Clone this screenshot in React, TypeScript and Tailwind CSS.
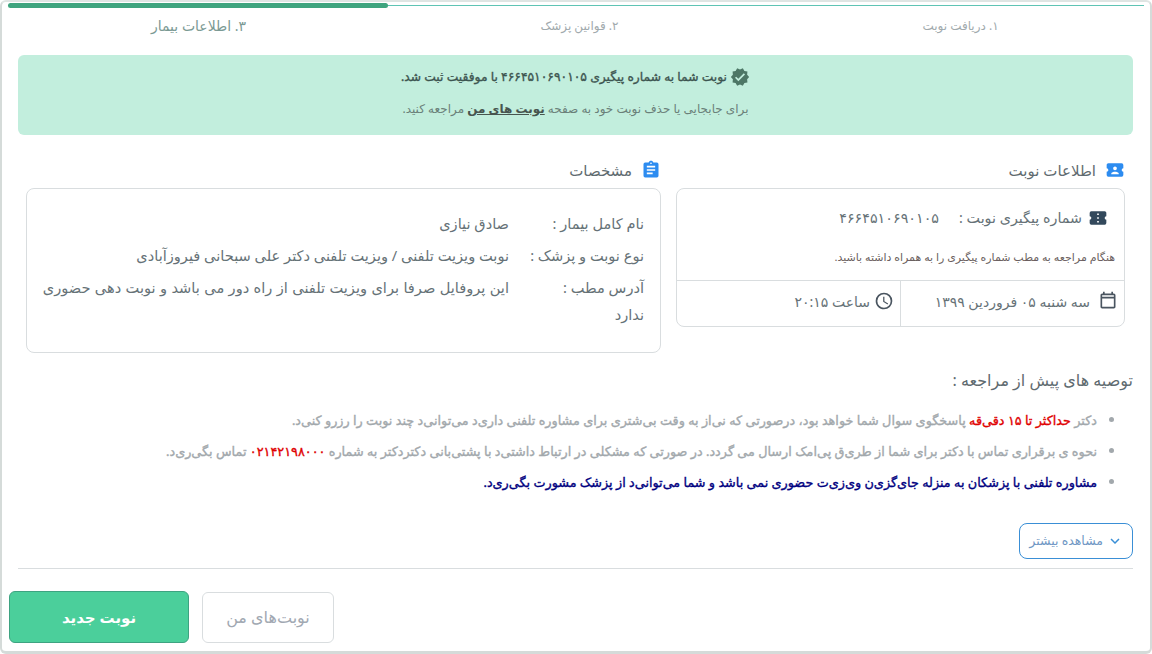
import React from "react";

const FONT = "font-['Noto_Sans','DejaVu_Sans',sans-serif]";

function Mdi({ d, className }: { d: string; className: string }) {
  return (
    <svg viewBox="0 0 24 24" className={className} fill="currentColor" aria-hidden="true">
      <path d={d} />
    </svg>
  );
}

const icons = {
  decagram:
    "M23,12L20.56,9.22L20.9,5.54L17.29,4.72L15.4,1.54L12,3L8.6,1.54L6.71,4.72L3.1,5.53L3.44,9.21L1,12L3.44,14.78L3.1,18.47L6.71,19.29L8.6,22.47L12,21L15.4,22.46L17.29,19.28L20.9,18.46L20.56,14.78L23,12M10,17L6,13L7.41,11.59L10,14.17L16.59,7.58L18,9L10,17Z",
  clipboard:
    "M17,9H7V7H17M17,13H7V11H17M14,17H7V15H14M12,3A1,1 0 0,1 13,4A1,1 0 0,1 12,5A1,1 0 0,1 11,4A1,1 0 0,1 12,3M19,3H14.82C14.4,1.84 13.3,1 12,1C10.7,1 9.6,1.84 9.18,3H5A2,2 0 0,0 3,5V19A2,2 0 0,0 5,21H19A2,2 0 0,0 21,19V5A2,2 0 0,0 19,3Z",
  ticketAccount:
    "M20,12A2,2 0 0,0 22,14V18A2,2 0 0,1 20,20H4A2,2 0 0,1 2,18V14C3.11,14 4,13.1 4,12A2,2 0 0,0 2,10V6C2,4.89 2.9,4 4,4H20A2,2 0 0,1 22,6V10A2,2 0 0,0 20,12M16.5,16.25C16.5,14.75 13.5,14 12,14C10.5,14 7.5,14.75 7.5,16.25V17H16.5V16.25M12,12.25A2.25,2.25 0 0,0 14.25,10A2.25,2.25 0 0,0 12,7.75A2.25,2.25 0 0,0 9.75,10A2.25,2.25 0 0,0 12,12.25Z",
  ticket:
    "M13,8.5H11V6.5H13V8.5M13,13H11V11H13V13M13,17.5H11V15.5H13V17.5M22,10V6C22,4.89 21.1,4 20,4H4A2,2 0 0,0 2,6V10C3.11,10 4,10.9 4,12A2,2 0 0,1 2,14V18A2,2 0 0,0 4,20H20A2,2 0 0,0 22,18V14A2,2 0 0,1 20,12A2,2 0 0,1 22,10Z",
  calendar:
    "M19 3H18V1H16V3H8V1H6V3H5C3.9 3 3 3.9 3 5V19C3 20.1 3.9 21 5 21H19C20.1 21 21 20.1 21 19V5C21 3.9 20.1 3 19 3M19 19H5V9H19V19M19 7H5V5H19V7Z",
  clock:
    "M12,20A8,8 0 0,0 20,12A8,8 0 0,0 12,4A8,8 0 0,0 4,12A8,8 0 0,0 12,20M12,2A10,10 0 0,1 22,12A10,10 0 0,1 12,22C6.47,22 2,17.5 2,12A10,10 0 0,1 12,2M12.5,7V12.25L17,14.92L16.25,16.15L11,13V7H12.5Z",
  chevron: "M7.41,8.58L12,13.17L16.59,8.58L18,10L12,16L6,10L7.41,8.58Z",
};

function Row({ label, children }: { label: string; children: React.ReactNode }) {
  return (
    <div className="flex">
      <div className="w-[135px] shrink-0 whitespace-nowrap">{label}</div>
      <div className="flex-1">{children}</div>
    </div>
  );
}

export default function App() {
  return (
    <div
      dir="rtl"
      className={`${FONT} relative flex h-[654px] w-[1152px] flex-col overflow-hidden rounded-md border-2 border-b-[3px] border-[#d5dbd9] border-t-[#dfe5e3] bg-white text-[#667277]`}
    >
      <div className="mx-[6px] mt-[1px] flex h-[5px] flex-row-reverse items-center">
        <div className="h-[5px] w-[380px] rounded-full bg-[#3fa57f]" />
        <div className="h-px flex-1 bg-[#5fc4b4]" />
      </div>

      <div className="ml-[6px] mr-[-1px] mt-[8px] grid h-[20px] grid-cols-3 text-center text-[12px] leading-[20px] text-[#a1aaad]">
        <div>۱. دریافت نوبت</div>
        <div>۲. قوانین پزشک</div>
        <div className="text-[14px] text-[#7b9a94]">۳. اطلاعات بیمار</div>
      </div>

      <div className="ml-[16px] mr-[17px] mt-[19px] flex h-[80px] flex-col items-center justify-center gap-[15px] rounded-md bg-[#c2eedd] pb-[5px] text-[#3d5550]">
        <div className="flex h-[18px] items-center gap-[3px] text-[12.3px] leading-[18px] [-webkit-text-stroke-width:0.35px]">
          <Mdi d={icons.decagram} className="h-[20px] w-[20px] text-[#4d7766]" />
          <span>نوبت شما به شماره پیگیری ۴۶۶۴۵۱۰۶۹۰۱۰۵ با موفقیت ثبت شد.</span>
        </div>
        <div className="h-[16px] text-[12px] leading-[16px] text-[#6a8079]">
          برای جابجایی یا حذف نوبت خود به صفحه <b className="font-bold text-[#47554f] underline">نوبت های من</b> مراجعه کنید.
        </div>
      </div>

      <div className="ml-[24px] mr-[25px] mt-[26px] flex items-start gap-[15px]">
        <section className="w-[449px] shrink-0">
          <h2 className="flex h-[18px] items-center gap-[9px] text-[15px] font-normal leading-[18px] text-[#5f6b70]">
            <Mdi d={icons.ticketAccount} className="h-[20px] w-[20px] text-[#2d8cf0]" />
            اطلاعات نوبت
          </h2>
          <div className="mt-[9px] h-[139px] overflow-hidden rounded-[8px] border border-[#d9dddf]">
            <div className="flex h-[57px] items-center pr-[16px] text-[14.3px]">
              <Mdi d={icons.ticket} className="ml-[6px] h-[20px] w-[20px] text-[#33495c]" />
              <span>شماره پیگیری نوبت :</span>
              <span className="mr-[20px]">۴۶۶۴۵۱۰۶۹۰۱۰۵</span>
            </div>
            <div className="h-[34px] pr-[9px] pt-[1px] text-[11px] leading-[20px] text-[#6b5f60]">
              هنگام مراجعه به مطب شماره پیگیری را به همراه داشته باشید.
            </div>
            <div className="flex h-[46px] border-t border-[#d9dddf] text-[14px]">
              <div className="flex w-[224px] items-center gap-[8px] border-l border-[#d9dddf] pb-[5px] pr-[6px]">
                <Mdi d={icons.calendar} className="h-[20px] w-[20px] text-[#4a5560]" />
                سه شنبه ۰۵ فروردین ۱۳۹۹
              </div>
              <div className="flex items-center gap-[4px] pb-[5px] pr-[6px]">
                <Mdi d={icons.clock} className="h-[20px] w-[20px] text-[#4a5560]" />
                ساعت ۲۰:۱۵
              </div>
            </div>
          </div>
        </section>

        <section className="min-w-0 flex-1">
          <h2 className="flex h-[18px] items-center gap-[9px] text-[15px] font-normal leading-[18px] text-[#5f6b70]">
            <Mdi d={icons.clipboard} className="h-[20px] w-[20px] text-[#2d8cf0]" />
            مشخصات
          </h2>
          <div className="mt-[9px] flex h-[165px] flex-col gap-[7px] rounded-[8px] border border-[#d9dddf] px-[16px] pt-[22px] text-[14.6px] leading-[25px]">
            <Row label="نام کامل بیمار :">صادق نیازی</Row>
            <Row label="نوع نوبت و پزشک :">نوبت ویزیت تلفنی / ویزیت تلفنی دکتر علی سبحانی فیروزآبادی</Row>
            <div>
              <div className="flex">
                <div className="w-[135px] shrink-0">آدرس مطب :</div>
                <div className="whitespace-nowrap [word-spacing:0.6px]">این پروفایل صرفا برای ویزیت تلفنی از راه دور می باشد و نوبت دهی حضوری</div>
              </div>
              <div className="mt-[2px]">ندارد</div>
            </div>
          </div>
        </section>
      </div>

      <h3 className="ml-[16px] mr-[17px] mt-[15px] h-[24px] text-[16px] font-normal leading-[24px] text-[#5f6b70]">
        توصیه های پیش از مراجعه :
      </h3>

      <ul className="ml-[16px] mr-[17px] mt-[19px] flex flex-col gap-[13px] pr-[36px] text-[12.8px] leading-[18px] text-[#a2a8ac] [-webkit-text-stroke-width:0.35px] [list-style:disc] marker:text-[#a2a8ac] marker:text-[14px]">
        <li>
          دکتر <span className="text-[#e00000]">حداکثر تا ۱۵ دقی‌قه</span> پاسخگوی سوال شما خواهد بود، درصورتی که نی‌از به وقت بی‌شتری برای مشاوره تلفنی داری‌د می‌توانی‌د چند نوبت را رزرو کنی‌د.
        </li>
        <li>
          نحوه ی برقراری تماس با دکتر برای شما از طری‌ق پی‌امک ارسال می گردد. در صورتی که مشکلی در ارتباط داشتی‌د با پشتی‌بانی دکتردکتر به شماره <span className="text-[#e00000]">۰۲۱۴۲۱۹۸۰۰۰</span> تماس بگی‌ری‌د.
        </li>
        <li className="text-[#000080]">
          مشاوره تلفنی با پزشکان به منزله جای‌گزی‌ن وی‌زی‌ت حضوری نمی باشد و شما می‌توانی‌د از پزشک مشورت بگی‌ری‌د.
        </li>
      </ul>

      <div className="ml-[16px] mr-[17px] mt-[32px] flex">
        <button className="flex h-[36px] w-[114px] items-center gap-[3px] rounded-[8px] border border-[#3a8fd6] pr-[8px] text-[12.5px] text-[#6f97c4]">
          <Mdi d={icons.chevron} className="h-[18px] w-[18px] text-[#3a8fd6]" />
          مشاهده بیشتر
        </button>
      </div>

      <div className="ml-[16px] mr-[17px] mt-[9px] h-px bg-[#d9dddf]" />

      <div className="mx-[7px] mt-[22px] flex flex-row-reverse items-center gap-[13px]">
        <button className="h-[52px] w-[180px] rounded-[6px] border border-[#3ea381] bg-[#4bcf9b] text-[15px] font-bold text-white">
          نوبت جدید
        </button>
        <button className="h-[51px] w-[132px] rounded-[6px] border border-[#d9dddf] bg-white text-[16px] text-[#a1a8b2]">
          نوبت‌های من
        </button>
      </div>
    </div>
  );
}
